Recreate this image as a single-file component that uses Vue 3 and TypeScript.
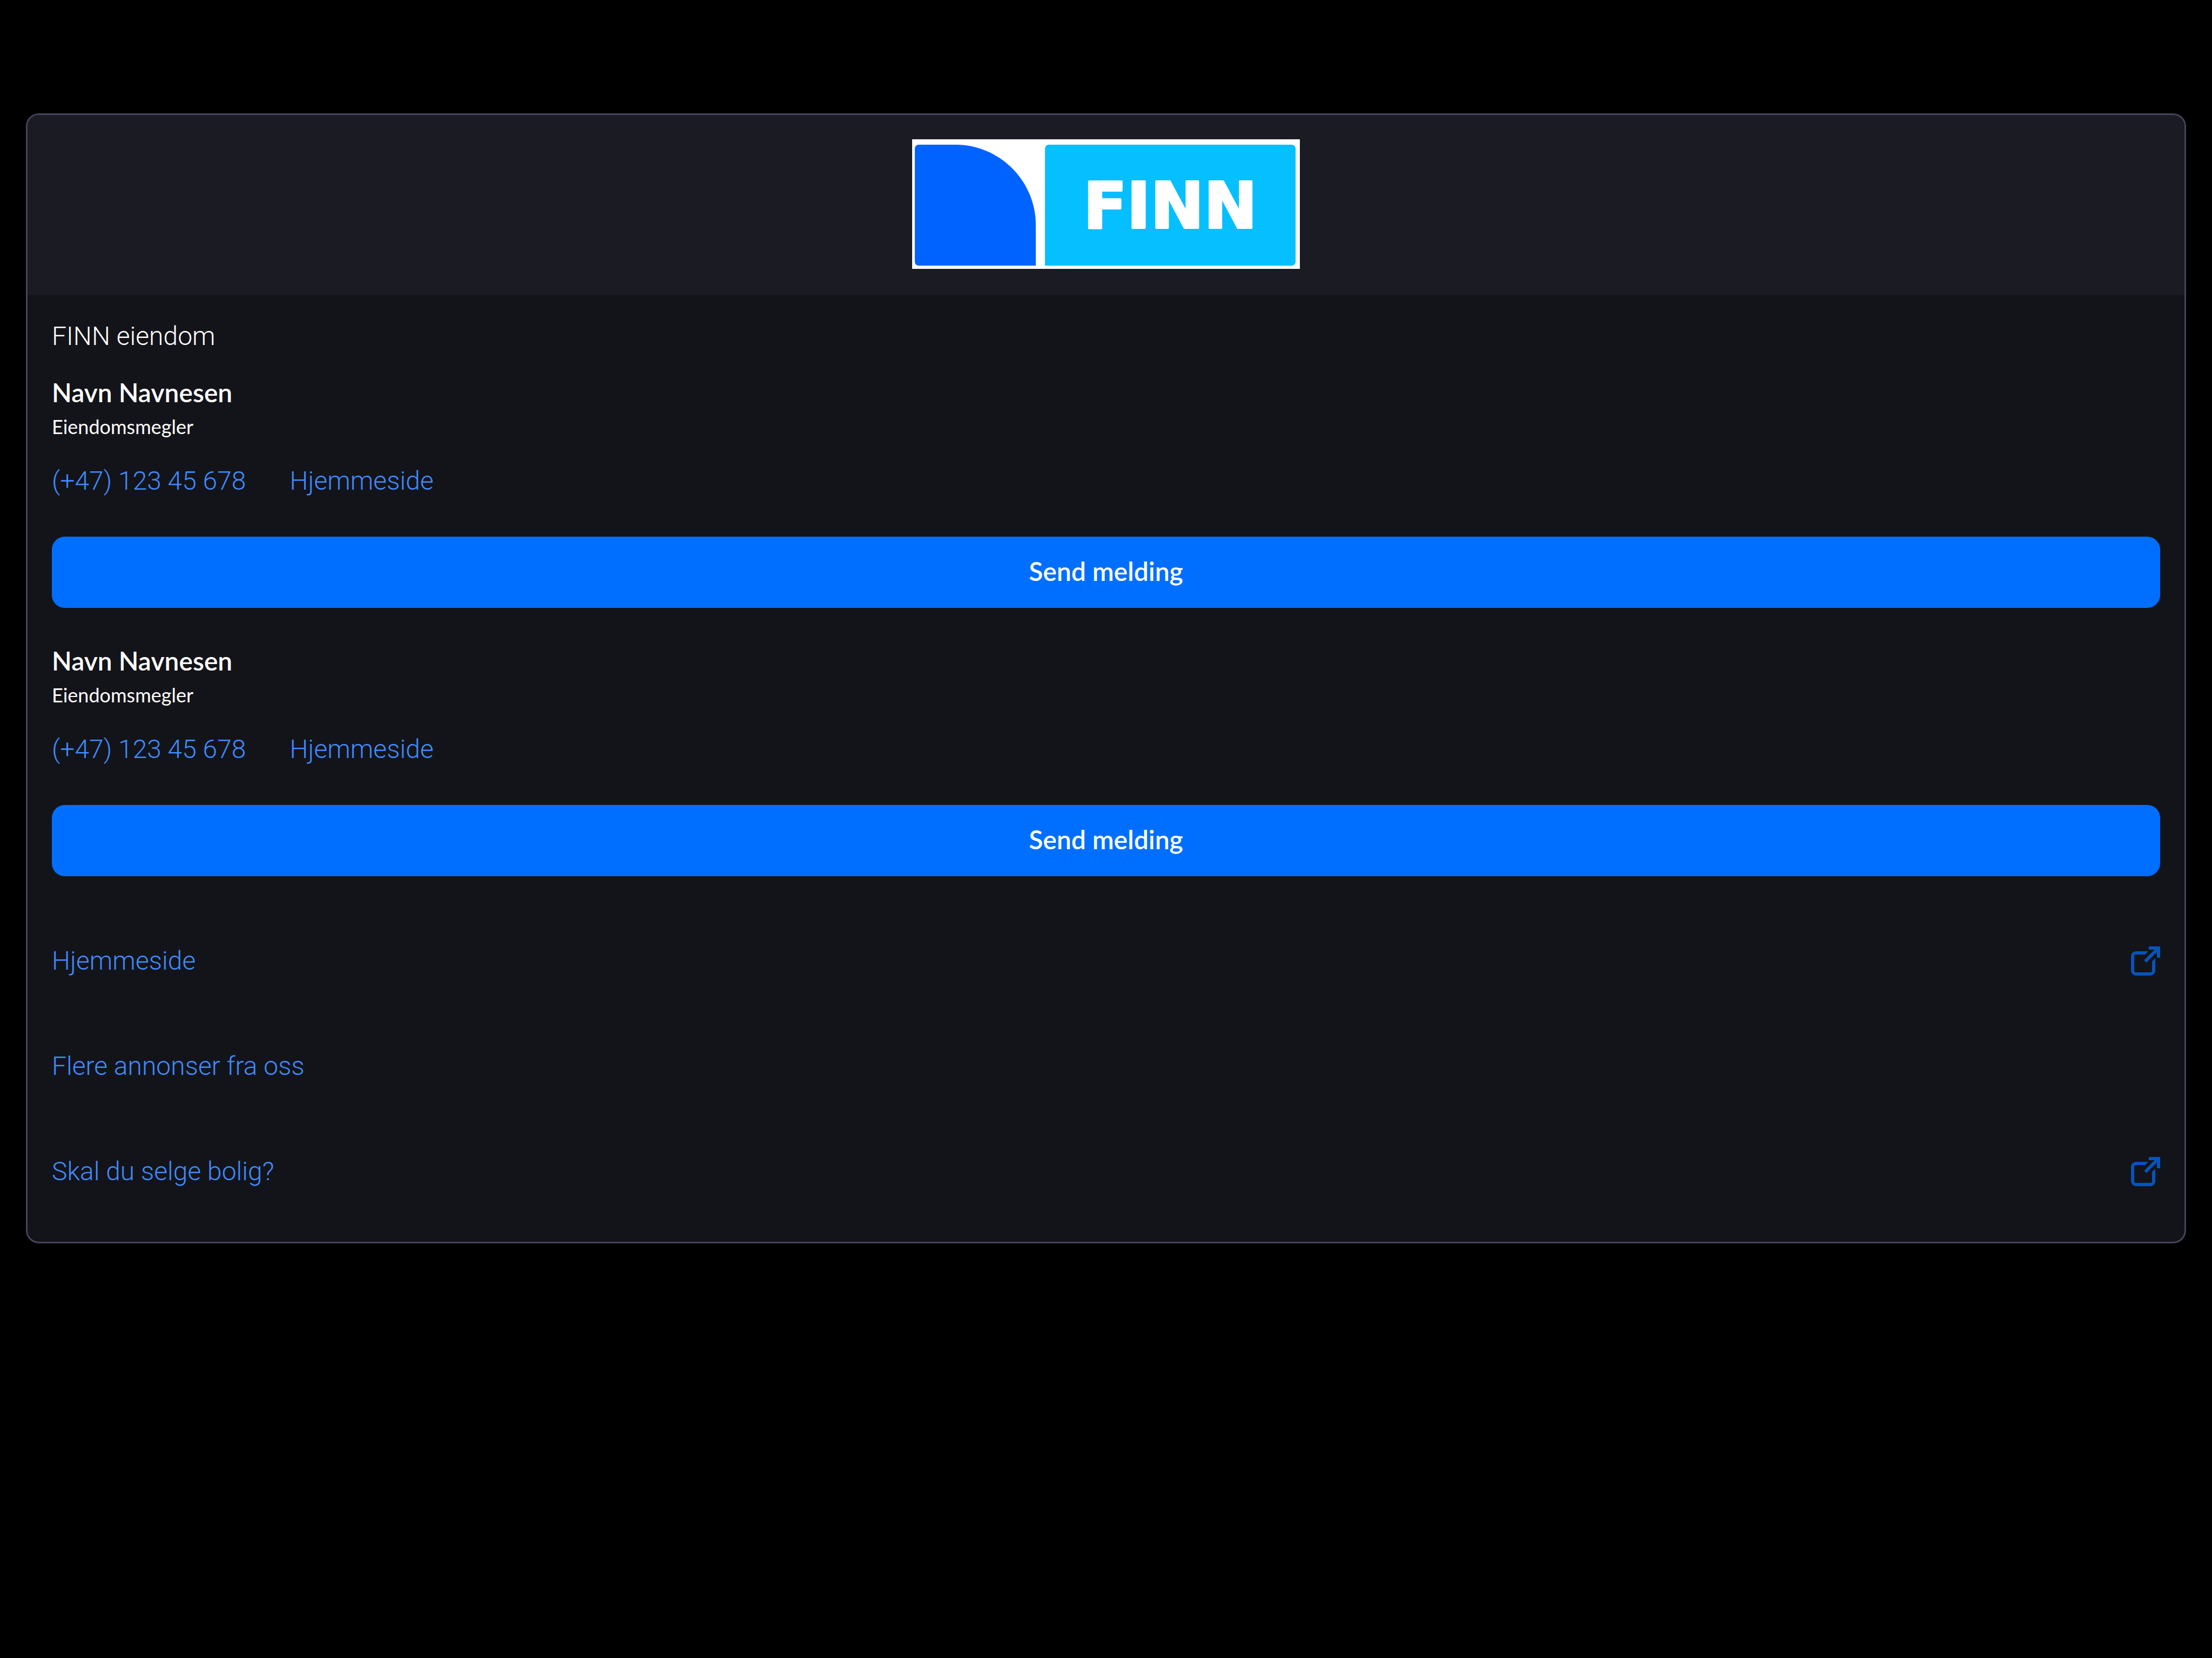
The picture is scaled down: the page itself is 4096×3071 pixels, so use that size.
<script setup lang="ts">
interface Agent {
  id: number
  name: string
  title: string
  phone: string
  phoneHref: string
}

interface CompanyLink {
  label: string
  external: boolean
}

const company = 'FINN eiendom'

const agents: Agent[] = [
  { id: 1, name: 'Navn Navnesen', title: 'Eiendomsmegler', phone: '(+47) 123 45 678', phoneHref: 'tel:+4712345678' },
  { id: 2, name: 'Navn Navnesen', title: 'Eiendomsmegler', phone: '(+47) 123 45 678', phoneHref: 'tel:+4712345678' },
]

const links: CompanyLink[] = [
  { label: 'Hjemmeside', external: true },
  { label: 'Flere annonser fra oss', external: false },
  { label: 'Skal du selge bolig?', external: true },
]
</script>

<template>
  <main class="page">
    <section class="card">
      <header class="card-header">
        <svg class="logo" viewBox="0 0 718 240" role="img" aria-label="FINN">
          <rect width="718" height="240" fill="#fff" />
          <path
            d="M12 10H80C162 10 229 77 229 159V234H12A7 7 0 0 1 5 227V17A7 7 0 0 1 12 10Z"
            fill="#0063ff"
          />
          <path
            d="M253 10H703A7 7 0 0 1 710 17V227A7 7 0 0 1 703 234H246V17A7 7 0 0 1 253 10Z"
            fill="#06bfff"
          />
          <text class="logo-text" x="478" y="164" text-anchor="middle">FINN</text>
        </svg>
      </header>

      <div class="card-body">
        <p class="company">{{ company }}</p>

        <ul class="agents">
          <li v-for="agent in agents" :key="agent.id" class="agent">
            <h2 class="agent-name">{{ agent.name }}</h2>
            <p class="agent-title">{{ agent.title }}</p>
            <div class="agent-contact">
              <a :href="agent.phoneHref">{{ agent.phone }}</a>
              <a href="#">Hjemmeside</a>
            </div>
            <button type="button" class="send">Send melding</button>
          </li>
        </ul>

        <nav class="links">
          <a v-for="link in links" :key="link.label" href="#" class="link-row">
            <span>{{ link.label }}</span>
            <svg v-if="link.external" class="external" viewBox="0 0 18 18" aria-hidden="true">
              <path
                d="M10.7 3H3A3 3 0 0 0 0 6V15A3 3 0 0 0 3 18H12A3 3 0 0 0 15 15V7.2L13 9.2V15A1 1 0 0 1 12 16H3A1 1 0 0 1 2 15V6A1 1 0 0 1 3 5H8.7Z"
              />
              <path d="M11 0H18V7H16V3.4L9.5 9.9L8.1 8.5L14.6 2H11Z" />
            </svg>
          </a>
        </nav>
      </div>
    </section>
  </main>
</template>

<style>
body {
  margin: 0;
  background: #000;
}
</style>

<style scoped>
.page {
  padding: 210px 48px 48px;
  font-family: Roboto, "Noto Sans", sans-serif;
  font-size: 48px;
  font-weight: 300;
  line-height: 66px;
  color: #fff;
}

.card {
  overflow: hidden;
  border: 3px solid #454459;
  border-radius: 24px;
  background: #131419;
}

.card-header {
  display: flex;
  justify-content: center;
  padding: 45px 45px 48px;
  background: #1b1b23;
}

.logo {
  display: block;
  width: 718px;
  height: 240px;
}

.logo-text {
  font-family: "DejaVu Sans", sans-serif;
  font-size: 118px;
  font-weight: 700;
  fill: #fff;
  stroke: #fff;
  stroke-width: 4px;
  stroke-linejoin: round;
}

.card-body {
  padding: 44px 45px 33px;
}

.company,
.agent-name,
.agent-title {
  margin: 0;
}

.company {
  margin-bottom: 38px;
}

.agents {
  display: flex;
  flex-direction: column;
  gap: 65px;
  margin: 0 0 59px;
  padding: 0;
  list-style: none;
}

.agent-name,
.agent-title,
.send {
  font-family: Lato, "Noto Sans", sans-serif;
}

.agent-name {
  font-size: 48px;
  font-weight: 600;
}

.agent-title {
  margin-top: 6px;
  font-size: 36px;
  font-weight: 400;
  line-height: 48px;
}

.agent-contact {
  display: flex;
  gap: 81px;
  margin: 44px 0 70px;
}

a {
  color: #3f8bff;
  text-decoration: none;
}

.send {
  display: block;
  width: 100%;
  padding: 31px 48px 35px;
  border: 0;
  border-radius: 24px;
  background: #006fff;
  color: #fff;
  font-size: 48px;
  font-weight: 600;
  line-height: 66px;
}

.link-row {
  display: flex;
  align-items: center;
  justify-content: space-between;
  min-height: 195px;
}

.external {
  width: 54px;
  height: 54px;
  fill: #0654bd;
}
</style>
